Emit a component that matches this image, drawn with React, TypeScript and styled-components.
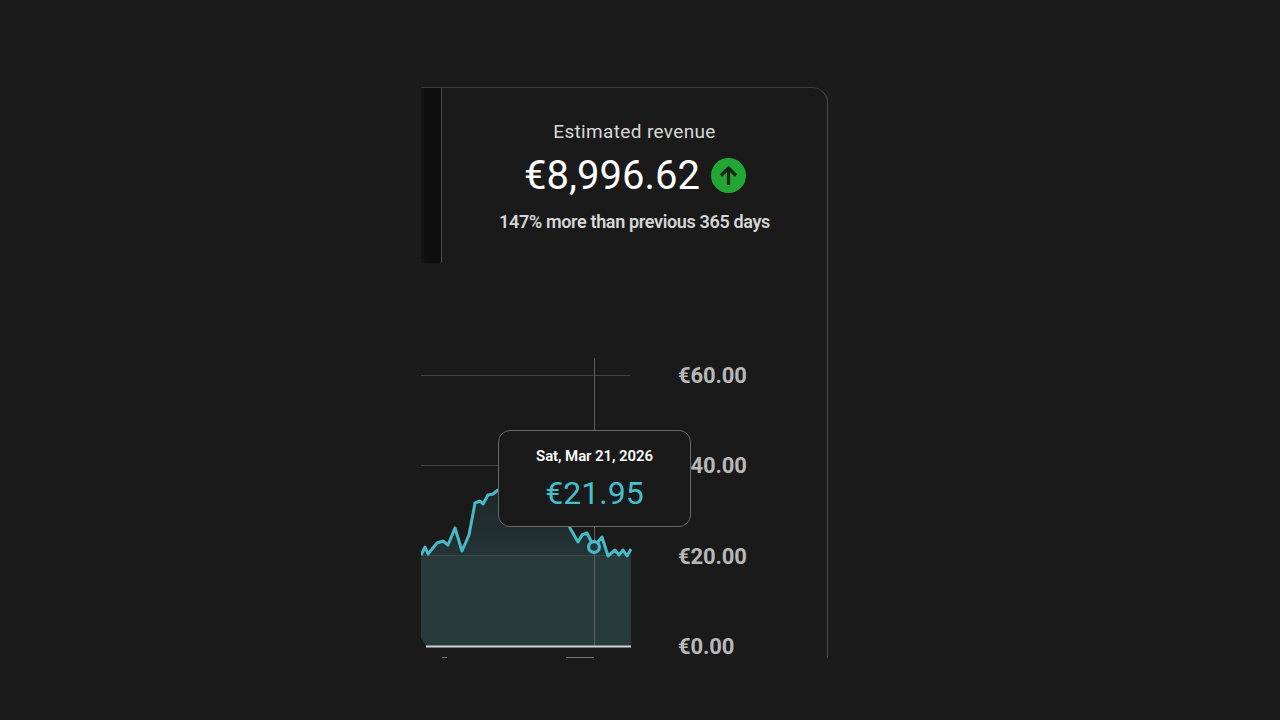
import React from "react";
import styled, { createGlobalStyle } from "styled-components";

const Global = createGlobalStyle`
  html, body { margin: 0; padding: 0; height: 100%; background: #1b1b1b; }
  #root { height: 100%; }
`;

const Stage = styled.main`
  width: 1280px;
  height: 720px;
  padding: 87px 0 0 421px;
  box-sizing: border-box;
  overflow: hidden;
  font-family: Roboto, "Liberation Sans", sans-serif;
`;

const Card = styled.section`
  width: 407px;
  height: 571px;
  box-sizing: border-box;
  background: #1a1a1a;
  border-top: 1px solid #3c3c3c;
  border-right: 1px solid #4a4a4a;
  border-top-right-radius: 16px;
`;

const Top = styled.div`
  display: flex;
  height: 175px;
`;

const Strip = styled.div`
  width: 20px;
  background: linear-gradient(90deg, #151515 0, #0e0e0e 25%, #0d0d0d 100%);
  border-right: 1px solid #4e4e4e;
`;

const Summary = styled.div`
  flex: 1;
  display: flex;
  flex-direction: column;
  align-items: center;
  padding-top: 33px;
`;

const Title = styled.div`
  font-size: 19px;
  line-height: 22px;
  letter-spacing: 0.35px;
  color: #d8d8d8;
`;

const ValueRow = styled.div`
  display: flex;
  align-items: center;
  gap: 11px;
  margin: 10px 0 0 1px;
`;

const Value = styled.div`
  font-size: 40px;
  line-height: 46px;
  color: #ffffff;
`;

const Badge = styled.svg`
  width: 35px;
  height: 35px;
  display: block;
  margin-top: -2px;
`;

const Delta = styled.div`
  margin-top: 12px;
  font-size: 18px;
  line-height: 22px;
  font-weight: 600;
  letter-spacing: -0.35px;
  color: #d6d6d6;
`;

const ChartRow = styled.div`
  position: relative;
  display: flex;
  height: 395px;
  padding-top: 95px;
  box-sizing: border-box;
`;

const Plot = styled.svg`
  width: 225px;
  height: 300px;
  display: block;
  flex: none;
`;

const Axis = styled.ul`
  list-style: none;
  margin: 7px 0 0 32px;
  padding: 0;
  height: 293px;
  display: flex;
  flex-direction: column;
  justify-content: space-between;
  font-size: 22px;
  line-height: 22px;
  font-weight: 700;
  letter-spacing: -0.1px;
  color: #b8b8b8;
`;

const Tooltip = styled.div`
  position: absolute;
  left: 77px;
  top: 167px;
  width: 193px;
  height: 97px;
  box-sizing: border-box;
  background: #1a1a1a;
  border: 1px solid #686868;
  border-radius: 12px;
  display: flex;
  flex-direction: column;
  align-items: center;
  padding-top: 16px;
`;

const TipDate = styled.div`
  font-size: 15px;
  line-height: 19px;
  font-weight: 600;
  letter-spacing: -0.1px;
  color: #ffffff;
`;

const TipValue = styled.div`
  margin-top: 8px;
  font-size: 32px;
  line-height: 38px;
  color: #45bfce;
`;

const line =
  "421,555 425,547 428,554 437,543 443,541 448,545 455,528 462,551 469,535 475,503 480,501 483,504 488,495 493,494 498,490 520,488 560,500 570,528 578,542 582,535 587,533 594,547 602,537 608,556 615,550 619,555 623,550 627,556 631,549";

export default function App() {
  return (
    <Stage>
      <Global />
      <Card>
        <Top>
          <Strip />
          <Summary>
            <Title>Estimated revenue</Title>
            <ValueRow>
              <Value>€8,996.62</Value>
              <Badge viewBox="0 0 35 35">
                <circle cx="17.5" cy="17.5" r="17.5" fill="#22a734" />
                <path d="M17.5 27V10M10 17.5l7.5-7.5 7.5 7.5" fill="none" stroke="#0f2412" strokeWidth="3.2" />
              </Badge>
            </ValueRow>
            <Delta>147% more than previous 365 days</Delta>
          </Summary>
        </Top>
        <ChartRow>
          <Plot viewBox="421 358 225 300">
            <defs>
              <linearGradient id="area" x1="0" y1="490" x2="0" y2="556" gradientUnits="userSpaceOnUse">
                <stop offset="0" stopColor="#223234" stopOpacity="0.55" />
                <stop offset="1" stopColor="#243436" />
              </linearGradient>
            </defs>
            <path d={`M${line.replace(/ /g, " L")} L631 556 L421 556 Z`} fill="url(#area)" />
            <path d="M421 556H631V646H426L421 638Z" fill="#273a3c" />
            <path d="M421 375.5H630M421 465.5H630M421 555.5H630" stroke="#424444" strokeWidth="1" />
            <path d="M594.5 358V646" stroke="#5c5f5f" strokeWidth="1" />
            <polyline points={line} fill="none" stroke="#45bac8" strokeWidth="3" strokeLinejoin="round" />
            <circle cx="594" cy="547" r="5.4" fill="#24383a" stroke="#45bac8" strokeWidth="3.2" />
            <rect x="426" y="645.5" width="205" height="2" fill="#d0d4d4" />
            <path d="M442 657.5h5M566 657.5h28" stroke="#777" strokeWidth="1" />
          </Plot>
          <Axis>
            <li>€60.00</li>
            <li>€40.00</li>
            <li>€20.00</li>
            <li>€0.00</li>
          </Axis>
          <Tooltip>
            <TipDate>Sat, Mar 21, 2026</TipDate>
            <TipValue>€21.95</TipValue>
          </Tooltip>
        </ChartRow>
      </Card>
    </Stage>
  );
}
